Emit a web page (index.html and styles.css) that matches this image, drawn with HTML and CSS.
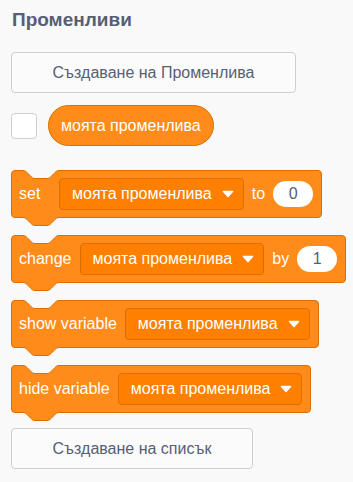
FILE: index.html
```html
<!DOCTYPE html>
<html lang="bg">
<head>
<meta charset="utf-8">
<title>Променливи</title>
<link rel="stylesheet" href="styles.css">
</head>
<body>
<div class="flyout">
  <div class="title">Променливи</div>
  <div class="btn btn-var">Създаване на Променлива</div>
  <div class="reporter-row">
    <span class="checkbox"></span>
    <span class="reporter">моята променлива</span>
  </div>

  <div class="block block-first">
    <svg class="notch" width="36" height="9" viewBox="0 0 36 9"><path class="notch-fill" d="M0,0 V0.5 c2,0 3,1 4,2 l4,4 c1,1 2,2 4,2 h12 c2,0 3,-1 4,-2 l4,-4 c1,-1 2,-2 4,-2 V0 Z"/><path class="edge" d="M0,0.5 c2,0 3,1 4,2 l4,4 c1,1 2,2 4,2 h12 c2,0 3,-1 4,-2 l4,-4 c1,-1 2,-2 4,-2"/></svg>
    <span class="label label-set">set</span>
    <span class="dropdown"><span>моята променлива</span><svg class="arrow" width="12" height="8" viewBox="0 0 12 8"><path d="M1.5,1.5 H10.5 L6,6.5 Z"/></svg></span>
    <span class="label">to</span>
    <span class="oval">0</span>
    <svg class="bump" width="36" height="9" viewBox="0 0 36 9"><path class="bump-fill" d="M0,0 V0.5 c2,0 3,1 4,2 l4,4 c1,1 2,2 4,2 h12 c2,0 3,-1 4,-2 l4,-4 c1,-1 2,-2 4,-2 V0 Z"/><path class="edge" d="M0,0.5 c2,0 3,1 4,2 l4,4 c1,1 2,2 4,2 h12 c2,0 3,-1 4,-2 l4,-4 c1,-1 2,-2 4,-2"/></svg>
  </div>

  <div class="block">
    <svg class="notch" width="36" height="9" viewBox="0 0 36 9"><path class="notch-fill" d="M0,0 V0.5 c2,0 3,1 4,2 l4,4 c1,1 2,2 4,2 h12 c2,0 3,-1 4,-2 l4,-4 c1,-1 2,-2 4,-2 V0 Z"/><path class="edge" d="M0,0.5 c2,0 3,1 4,2 l4,4 c1,1 2,2 4,2 h12 c2,0 3,-1 4,-2 l4,-4 c1,-1 2,-2 4,-2"/></svg>
    <span class="label">change</span>
    <span class="dropdown"><span>моята променлива</span><svg class="arrow" width="12" height="8" viewBox="0 0 12 8"><path d="M1.5,1.5 H10.5 L6,6.5 Z"/></svg></span>
    <span class="label">by</span>
    <span class="oval">1</span>
    <svg class="bump" width="36" height="9" viewBox="0 0 36 9"><path class="bump-fill" d="M0,0 V0.5 c2,0 3,1 4,2 l4,4 c1,1 2,2 4,2 h12 c2,0 3,-1 4,-2 l4,-4 c1,-1 2,-2 4,-2 V0 Z"/><path class="edge" d="M0,0.5 c2,0 3,1 4,2 l4,4 c1,1 2,2 4,2 h12 c2,0 3,-1 4,-2 l4,-4 c1,-1 2,-2 4,-2"/></svg>
  </div>

  <div class="block">
    <svg class="notch" width="36" height="9" viewBox="0 0 36 9"><path class="notch-fill" d="M0,0 V0.5 c2,0 3,1 4,2 l4,4 c1,1 2,2 4,2 h12 c2,0 3,-1 4,-2 l4,-4 c1,-1 2,-2 4,-2 V0 Z"/><path class="edge" d="M0,0.5 c2,0 3,1 4,2 l4,4 c1,1 2,2 4,2 h12 c2,0 3,-1 4,-2 l4,-4 c1,-1 2,-2 4,-2"/></svg>
    <span class="label">show variable</span>
    <span class="dropdown"><span>моята променлива</span><svg class="arrow" width="12" height="8" viewBox="0 0 12 8"><path d="M1.5,1.5 H10.5 L6,6.5 Z"/></svg></span>
    <svg class="bump" width="36" height="9" viewBox="0 0 36 9"><path class="bump-fill" d="M0,0 V0.5 c2,0 3,1 4,2 l4,4 c1,1 2,2 4,2 h12 c2,0 3,-1 4,-2 l4,-4 c1,-1 2,-2 4,-2 V0 Z"/><path class="edge" d="M0,0.5 c2,0 3,1 4,2 l4,4 c1,1 2,2 4,2 h12 c2,0 3,-1 4,-2 l4,-4 c1,-1 2,-2 4,-2"/></svg>
  </div>

  <div class="block">
    <svg class="notch" width="36" height="9" viewBox="0 0 36 9"><path class="notch-fill" d="M0,0 V0.5 c2,0 3,1 4,2 l4,4 c1,1 2,2 4,2 h12 c2,0 3,-1 4,-2 l4,-4 c1,-1 2,-2 4,-2 V0 Z"/><path class="edge" d="M0,0.5 c2,0 3,1 4,2 l4,4 c1,1 2,2 4,2 h12 c2,0 3,-1 4,-2 l4,-4 c1,-1 2,-2 4,-2"/></svg>
    <span class="label">hide variable</span>
    <span class="dropdown"><span>моята променлива</span><svg class="arrow" width="12" height="8" viewBox="0 0 12 8"><path d="M1.5,1.5 H10.5 L6,6.5 Z"/></svg></span>
    <svg class="bump" width="36" height="9" viewBox="0 0 36 9"><path class="bump-fill" d="M0,0 V0.5 c2,0 3,1 4,2 l4,4 c1,1 2,2 4,2 h12 c2,0 3,-1 4,-2 l4,-4 c1,-1 2,-2 4,-2 V0 Z"/><path class="edge" d="M0,0.5 c2,0 3,1 4,2 l4,4 c1,1 2,2 4,2 h12 c2,0 3,-1 4,-2 l4,-4 c1,-1 2,-2 4,-2"/></svg>
  </div>

  <div class="btn btn-list">Създаване на списък</div>
</div>
</body>
</html>
```

FILE: styles.css
```css
html, body {
  margin: 0;
  background: #f9f9f9;
}

body {
  font-family: "Liberation Sans", Arial, sans-serif;
}

.flyout {
  display: flex;
  flex-direction: column;
  align-items: flex-start;
  padding: 9px 11px;
}

.title {
  font-weight: bold;
  font-size: 19px;
  line-height: 22px;
  color: #575e75;
  margin-left: 1px;
}

.btn {
  box-sizing: border-box;
  height: 41px;
  border: 1px solid #cfcfcf;
  border-radius: 4px;
  display: flex;
  align-items: center;
  justify-content: center;
  font-size: 16px;
  color: #575e75;
  background: #fbfbfb;
}

.btn-var {
  width: 285px;
  margin-top: 21px;
}

.btn-list {
  width: 242px;
  margin-top: 15px;
}

.reporter-row {
  display: flex;
  align-items: center;
  gap: 11px;
  height: 41px;
  margin-top: 12px;
}

.checkbox {
  box-sizing: border-box;
  width: 26px;
  height: 26px;
  border: 1px solid #cfcfcf;
  border-radius: 4px;
  background: #ffffff;
}

.reporter {
  box-sizing: border-box;
  height: 41px;
  padding: 0 12px;
  display: flex;
  align-items: center;
  border-radius: 21px;
  background: #ff8c1a;
  border: 1px solid #db6e00;
  color: #ffffff;
  font-size: 16px;
}

.block {
  position: relative;
  box-sizing: border-box;
  height: 48px;
  display: flex;
  align-items: center;
  gap: 8px;
  padding: 0 8px 0 7px;
  background: #ff8c1a;
  border: 1px solid #db6e00;
  border-radius: 4px;
  color: #ffffff;
  font-size: 16px;
}

.block-first {
  margin-top: 24px;
}

.block + .block {
  margin-top: 17px;
}

.label {
  white-space: nowrap;
}

.label-set {
  min-width: 32px;
}

.dropdown {
  box-sizing: border-box;
  height: 32px;
  display: flex;
  align-items: center;
  gap: 10px;
  padding: 0 9px 0 12px;
  background: #ff8000;
  border: 1px solid #db6e00;
  border-radius: 4px;
  white-space: nowrap;
}

.arrow path {
  fill: #ffffff;
  stroke: #ffffff;
  stroke-width: 1.5;
  stroke-linejoin: round;
}

.oval {
  box-sizing: border-box;
  width: 40px;
  height: 26px;
  border-radius: 13px;
  background: #ffffff;
  color: #575e75;
  display: flex;
  align-items: center;
  justify-content: center;
}

.notch,
.bump {
  position: absolute;
  left: 11px;
  overflow: visible;
}

.notch {
  top: -1px;
}

.bump {
  top: 100%;
}

.notch-fill {
  fill: #f9f9f9;
}

.bump-fill {
  fill: #ff8c1a;
}

.edge {
  fill: none;
  stroke: #db6e00;
  stroke-width: 1;
}
```
